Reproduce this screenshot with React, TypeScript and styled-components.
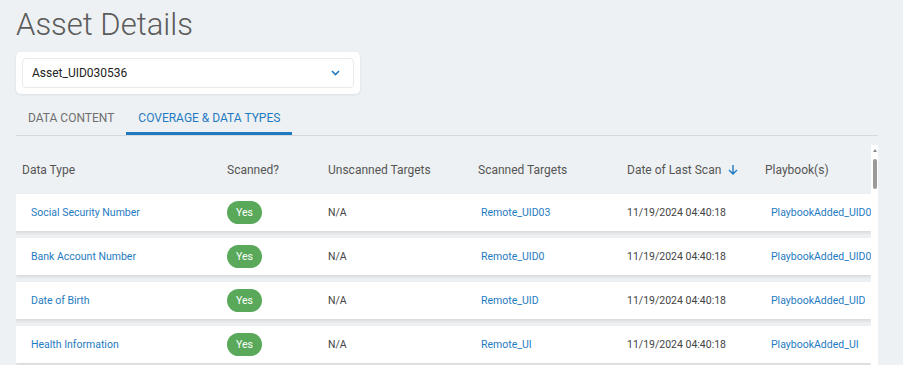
import styled, { createGlobalStyle } from 'styled-components';

const GlobalStyle = createGlobalStyle`
  body {
    margin: 0;
    background: #eef1f3;
    font-family: Roboto, "Liberation Sans", sans-serif;
  }
`;

const Page = styled.div`
  padding: 0 16px;
  height: 365px;
  overflow: hidden;
`;

const Title = styled.h1`
  margin: 0;
  font-weight: 300;
  font-size: 31px;
  line-height: 50px;
  color: #5b5b5b;
`;

const SelectCard = styled.div`
  box-sizing: border-box;
  width: 344px;
  height: 42px;
  margin-top: 2px;
  padding: 6px;
  background: #fff;
  border-radius: 5px;
  box-shadow: 0 1px 3px rgba(0, 0, 0, 0.08);
`;

const Select = styled.div`
  display: flex;
  align-items: center;
  justify-content: space-between;
  height: 30px;
  box-sizing: border-box;
  padding: 0 13px 0 9px;
  border: 1px solid #e8ebee;
  border-radius: 4px;
  font-size: 12px;
  color: #222;
`;

const Tabs = styled.div`
  display: flex;
  width: 862px;
  margin-top: 10px;
  border-bottom: 1px solid #d5d9dc;
`;

const Tab = styled.div<{ $active?: boolean }>`
  box-sizing: border-box;
  height: 31px;
  padding: 0 12px;
  line-height: 29px;
  font-size: 12px;
  text-transform: uppercase;
  color: ${p => (p.$active ? '#1f7bc1' : '#6f6f6f')};
  border-bottom: 3px solid ${p => (p.$active ? '#1f7bc1' : 'transparent')};
`;

const TableWrap = styled.div`
  display: flex;
  margin-top: 9px;
`;

const Viewport = styled.div`
  width: 855px;
  overflow: hidden;
`;

const Grid = styled.div<{ $header?: boolean }>`
  display: grid;
  grid-template-columns: 211px 101px 150px 149px 138px 1fr;
  align-items: center;
  height: ${p => (p.$header ? '49px' : '37px')};
  margin-bottom: ${p => (p.$header ? '0' : '7px')};
  background: ${p => (p.$header ? 'transparent' : '#fff')};
  box-shadow: ${p => (p.$header ? 'none' : '0 2px 3px rgba(0, 0, 0, 0.1)')};
  font-size: ${p => (p.$header ? '12px' : '10.5px')};
  color: ${p => (p.$header ? '#555' : '#444')};
`;

const Cell = styled.div<{ $pad?: number; $link?: boolean }>`
  display: flex;
  align-items: center;
  padding-left: ${p => p.$pad ?? 0}px;
  overflow: hidden;
  white-space: nowrap;
  color: ${p => (p.$link ? '#1f7bc1' : 'inherit')};
`;

const Clip = styled.span<{ $w: number }>`
  display: inline-block;
  max-width: ${p => p.$w}px;
  overflow: hidden;
`;

const Pill = styled.span`
  display: inline-flex;
  align-items: center;
  justify-content: center;
  width: 35px;
  height: 23px;
  border-radius: 12px;
  background: #5aa95a;
  color: #fff;
  font-size: 10.5px;
`;

const SortIcon = styled.svg`
  margin-left: 7px;
`;

const Track = styled.div`
  display: flex;
  flex-direction: column;
  align-items: center;
  width: 7px;
  background: #fff;
`;

const UpArrow = styled.div`
  margin-top: 4px;
  border-left: 2.5px solid transparent;
  border-right: 2.5px solid transparent;
  border-bottom: 3px solid #8a8a8a;
`;

const Thumb = styled.div`
  width: 4px;
  height: 30px;
  margin-top: 7px;
  border-radius: 2px;
  background: #9a9a9a;
`;

const rows = [
  { type: 'Social Security Number', target: 'Remote_UID03', book: 'PlaybookAdded_UID03', clip: 100 },
  { type: 'Bank Account Number', target: 'Remote_UID0', book: 'PlaybookAdded_UID03', clip: 100 },
  { type: 'Date of Birth', target: 'Remote_UID', book: 'PlaybookAdded_UID0', clip: 94 },
  { type: 'Health Information', target: 'Remote_UI', book: 'PlaybookAdded_UID', clip: 88 },
];

export default function App() {
  return (
    <Page>
      <GlobalStyle />
      <Title>Asset Details</Title>
      <SelectCard>
        <Select>
          <span>Asset_UID030536</span>
          <svg width="9" height="6" viewBox="0 0 9 6">
            <path d="M1 1l3.5 3.5L8 1" fill="none" stroke="#1f7bc1" strokeWidth="1.6" />
          </svg>
        </Select>
      </SelectCard>
      <Tabs>
        <Tab>Data Content</Tab>
        <Tab $active>Coverage &amp; Data Types</Tab>
      </Tabs>
      <TableWrap>
        <Viewport>
          <Grid $header>
            <Cell $pad={6}>Data Type</Cell>
            <Cell>Scanned?</Cell>
            <Cell>Unscanned Targets</Cell>
            <Cell>Scanned Targets</Cell>
            <Cell>
              Date of Last Scan
              <SortIcon width="10" height="11" viewBox="0 0 10 11">
                <path d="M5 1v9M1 6l4 4 4-4" fill="none" stroke="#1f7bc1" strokeWidth="1.4" />
              </SortIcon>
            </Cell>
            <Cell>Playbook(s)</Cell>
          </Grid>
          {rows.map(r => (
            <Grid key={r.type}>
              <Cell $pad={15} $link>{r.type}</Cell>
              <Cell><Pill>Yes</Pill></Cell>
              <Cell>N/A</Cell>
              <Cell $pad={3} $link>{r.target}</Cell>
              <Cell>11/19/2024 04:40:18</Cell>
              <Cell $pad={6} $link><Clip $w={r.clip}>{r.book}</Clip></Cell>
            </Grid>
          ))}
        </Viewport>
        <Track>
          <UpArrow />
          <Thumb />
        </Track>
      </TableWrap>
    </Page>
  );
}
